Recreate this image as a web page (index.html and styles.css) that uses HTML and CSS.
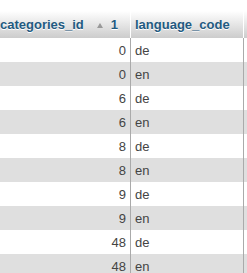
FILE: index.html
```html
<!DOCTYPE html>
<html>
<head>
<meta charset="utf-8">
<link rel="stylesheet" href="styles.css">
</head>
<body>
<div class="wrap">
<table class="grid">
<thead>
<tr>
<th class="c1"><span class="name">categories_id</span><span class="sort"></span><span class="order">1</span></th>
<th class="c2">language_code</th>
<th class="c3"></th>
</tr>
</thead>
<tbody>
<tr class="odd"><td class="num">0</td><td>de</td><td></td></tr>
<tr class="even"><td class="num">0</td><td>en</td><td></td></tr>
<tr class="odd"><td class="num">6</td><td>de</td><td></td></tr>
<tr class="even"><td class="num">6</td><td>en</td><td></td></tr>
<tr class="odd"><td class="num">8</td><td>de</td><td></td></tr>
<tr class="even"><td class="num">8</td><td>en</td><td></td></tr>
<tr class="odd"><td class="num">9</td><td>de</td><td></td></tr>
<tr class="even"><td class="num">9</td><td>en</td><td></td></tr>
<tr class="odd"><td class="num">48</td><td>de</td><td></td></tr>
<tr class="even"><td class="num">48</td><td>en</td><td></td></tr>
</tbody>
</table>
</div>
</body>
</html>
```
FILE: styles.css
```css
html, body {
  margin: 0;
  padding: 0;
  background: #fff;
  overflow: hidden;
}
.wrap {
  padding-top: 11px;
  width: 247px;
  overflow: hidden;
}
.grid {
  margin-left: -20px;
  border-collapse: separate;
  border-spacing: 0;
  table-layout: fixed;
  width: 364px;
  font-family: "Liberation Sans", Arial, sans-serif;
  font-size: 13px;
}
.grid th, .grid td {
  box-sizing: border-box;
  padding: 0 4px;
  white-space: nowrap;
  overflow: hidden;
}
.grid th {
  height: 27px;
  text-align: left;
  font-weight: bold;
  color: #235a81;
  text-shadow: 0 1px 0 #fff;
  background: linear-gradient(#ffffff, #cccccc);
  border-right: 1px solid #fff;
}
.grid th.c1 { width: 151px; padding-left: 20px; }
.grid th.c2 { width: 113px; }
.grid th.c3 { width: 100px; }
.sort {
  display: inline-block;
  width: 0;
  height: 0;
  border-left: 3.5px solid transparent;
  border-right: 3.5px solid transparent;
  border-bottom: 5px solid #999;
  margin-left: 13px;
  vertical-align: 1px;
}
.order {
  margin-left: 8px;
}
.grid td {
  height: 24px;
  color: #444;
  border-right: 1px solid #aaa;
}
.grid td.num { text-align: right; }
.grid tr.odd td { background: #fff; }
.grid tr.even td { background: #dfdfdf; }
```
